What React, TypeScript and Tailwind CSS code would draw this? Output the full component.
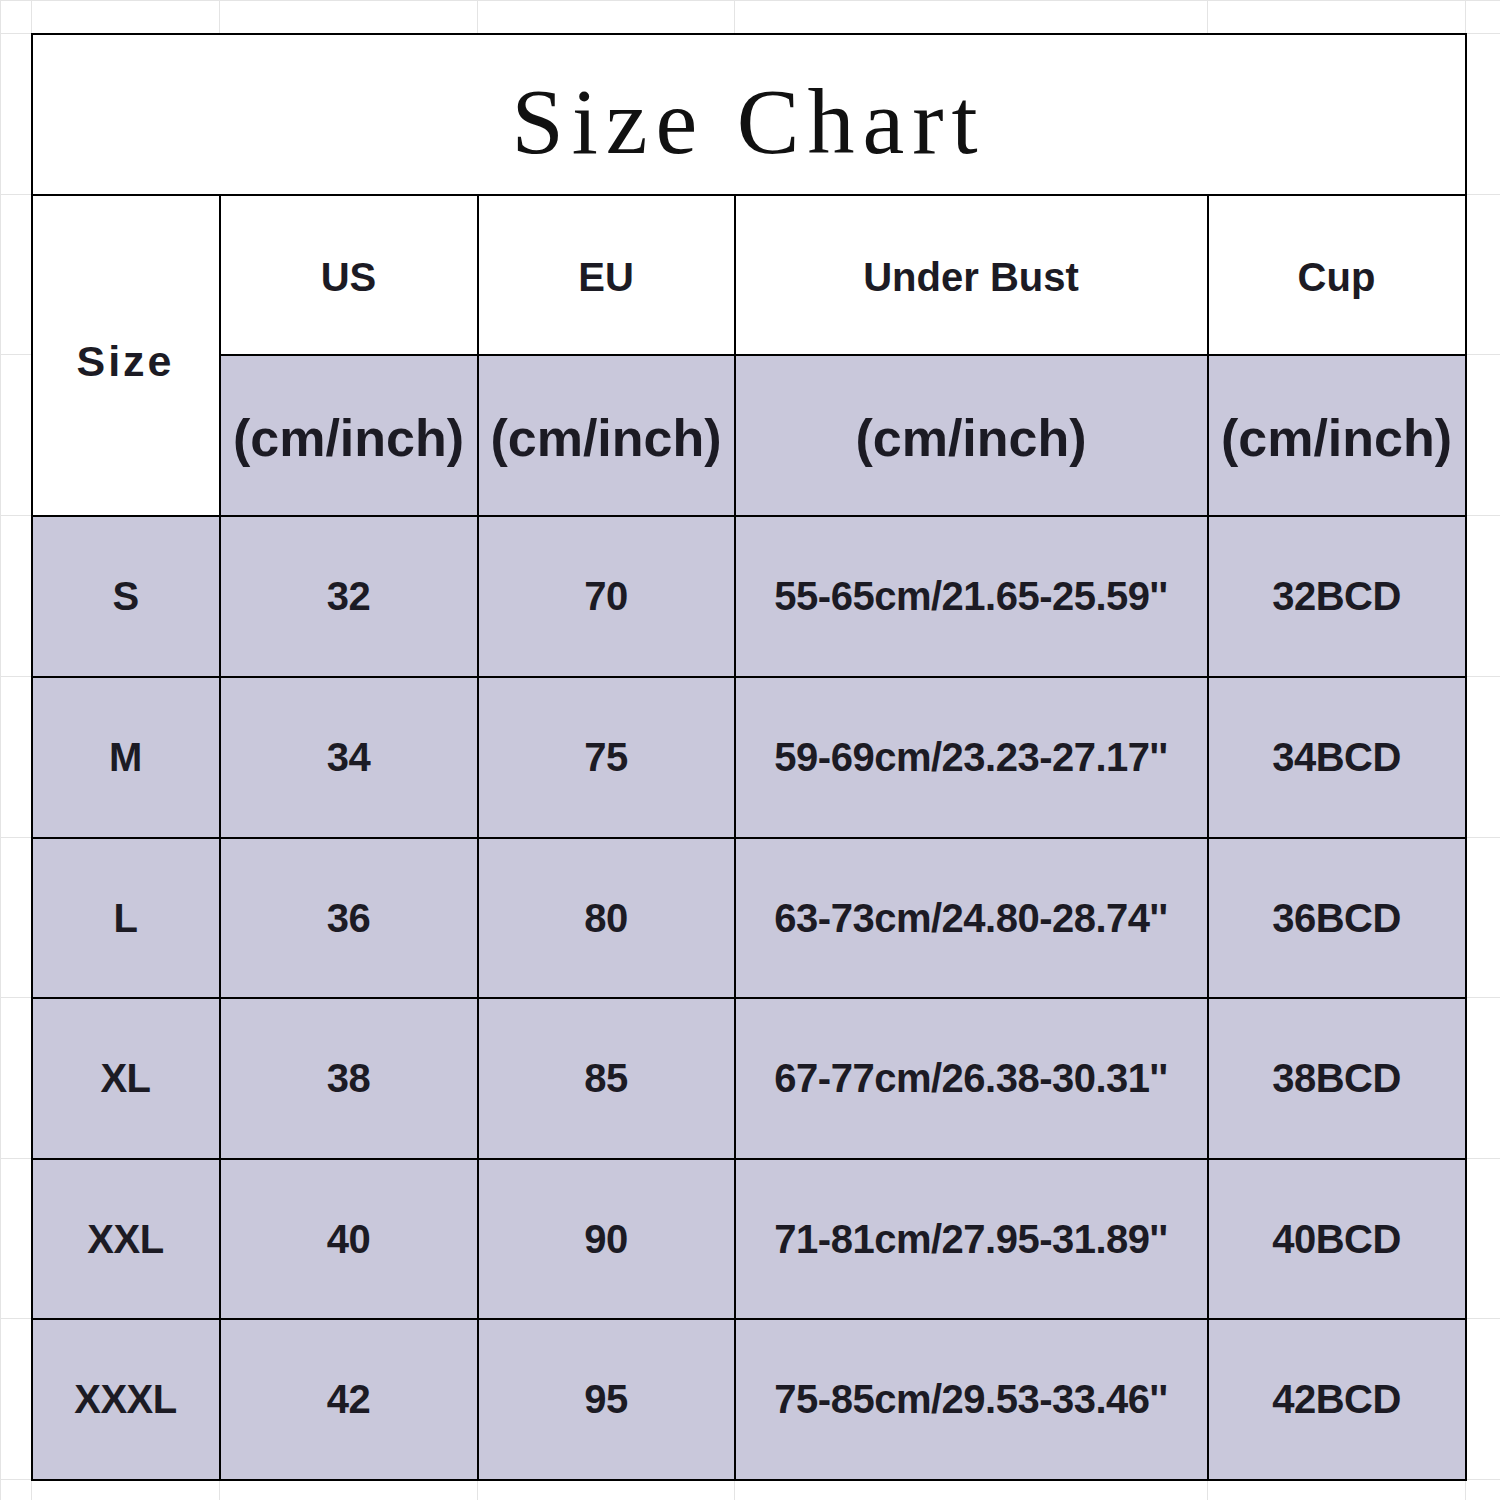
import React from "react";

const rows = [
  ["S", "32", "70", "55-65cm/21.65-25.59''", "32BCD"],
  ["M", "34", "75", "59-69cm/23.23-27.17''", "34BCD"],
  ["L", "36", "80", "63-73cm/24.80-28.74''", "36BCD"],
  ["XL", "38", "85", "67-77cm/26.38-30.31''", "38BCD"],
  ["XXL", "40", "90", "71-81cm/27.95-31.89''", "40BCD"],
  ["XXXL", "42", "95", "75-85cm/29.53-33.46''", "42BCD"],
];

const rowHeights = ["h-[161px]", "h-[161px]", "h-[160px]", "h-[161px]", "h-[160px]", "h-[161px]"];

const faint = "border border-[#e4e4e4]";
const cell = "border-2 border-black";

export default function App() {
  return (
    <div className="w-[1500px] h-[1500px] bg-white overflow-hidden font-['Liberation_Sans',Arial,sans-serif] text-[#1c1b24]">
      <table className="w-[1500px] border-collapse table-fixed">
        <colgroup>
          <col className="w-[31px]" />
          <col className="w-[188px]" />
          <col className="w-[258px]" />
          <col className="w-[257px]" />
          <col className="w-[473px]" />
          <col className="w-[258px]" />
          <col className="w-[35px]" />
        </colgroup>
        <tbody>
          <tr className="h-[33px]">
            {[0, 1, 2, 3, 4, 5, 6].map((i) => (
              <td key={i} className={faint} />
            ))}
          </tr>
          <tr className="h-[161px]">
            <td className={faint} />
            <td colSpan={5} className={`${cell} text-center align-middle bg-white`}>
              <span className="font-['Liberation_Serif','Times_New_Roman',serif] text-[94px] leading-none tracking-[8px] text-[#111] relative top-[7px]">
                Size Chart
              </span>
            </td>
            <td className={faint} />
          </tr>
          <tr className="h-[160px]">
            <td className={faint} />
            <td rowSpan={2} className={`${cell} bg-white text-center align-middle`}>
              <span className="text-[43px] font-bold tracking-[3px] relative top-[6px]">Size</span>
            </td>
            {["US", "EU", "Under Bust", "Cup"].map((h) => (
              <td key={h} className={`${cell} bg-white text-center align-middle text-[40px] font-bold`}>
                <span className="relative top-[2px]">{h}</span>
              </td>
            ))}
            <td className={faint} />
          </tr>
          <tr className="h-[161px]">
            <td className={faint} />
            {[0, 1, 2, 3].map((i) => (
              <td key={i} className={`${cell} bg-[#c9c8db] text-center align-middle text-[52px] font-bold whitespace-nowrap`}>
                <span className="relative top-[3px]">(cm/inch)</span>
              </td>
            ))}
            <td className={faint} />
          </tr>
          {rows.map((r, ri) => (
            <tr key={r[0]} className={rowHeights[ri]}>
              <td className={faint} />
              {r.map((v, ci) => (
                <td
                  key={ci}
                  className={`${cell} bg-[#c9c8db] text-center align-middle text-[40px] font-bold whitespace-nowrap tracking-[-0.5px]`}
                >
                  {v}
                </td>
              ))}
              <td className={faint} />
            </tr>
          ))}
          <tr className="h-[22px]">
            {[0, 1, 2, 3, 4, 5, 6].map((i) => (
              <td key={i} className={faint} />
            ))}
          </tr>
        </tbody>
      </table>
    </div>
  );
}
